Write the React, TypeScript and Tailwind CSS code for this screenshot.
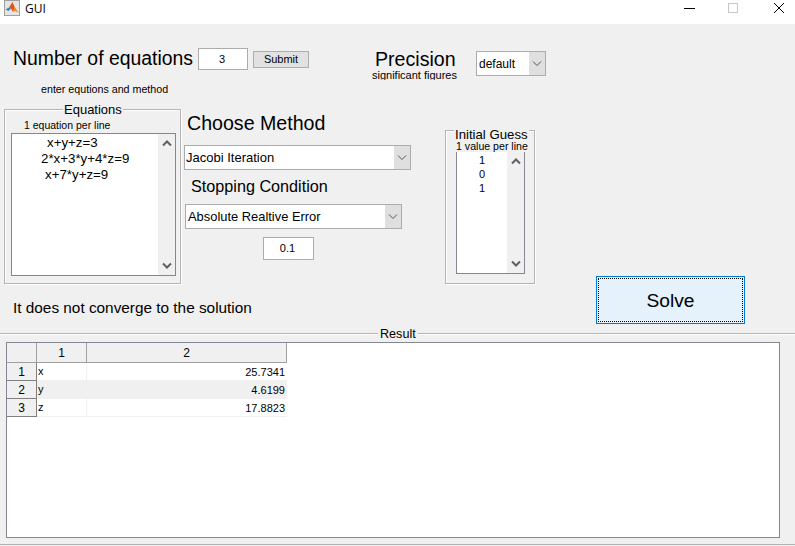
import React from 'react';

const sans = { fontFamily: '"Liberation Sans", Arial, sans-serif' };

const Chevron = ({ up = false, thick = false }: { up?: boolean; thick?: boolean }) => (
  <svg width="10" height="7" viewBox="0 0 10 7" fill="none" stroke={thick ? '#606060' : '#555555'} strokeWidth={thick ? 2 : 1}>
    <path d={up ? 'M1 5.5 L5 1.5 L9 5.5' : 'M1 1.5 L5 5.5 L9 1.5'} />
  </svg>
);

const Scrollbar = () => (
  <div className="w-[17px] bg-[#f0f0f0] flex flex-col items-center justify-between py-[6px] shrink-0">
    <Chevron up thick />
    <Chevron thick />
  </div>
);

const Dropdown = ({ label, className, text }: { label: string; className: string; text: string }) => (
  <div className={`flex items-stretch bg-white border border-[#acacac] ${className}`}>
    <div className={`flex-1 pl-[2px] flex items-center text-black whitespace-nowrap ${text}`}>{label}</div>
    <div className="w-[16px] bg-[#dfdfdf] flex items-center justify-center">
      <Chevron />
    </div>
  </div>
);

const NumberBox = ({ value, className }: { value: string; className: string }) => (
  <div className={`bg-white border border-[#acacac] flex items-center justify-center pr-[2px] text-[11px] text-black ${className}`}>
    {value}
  </div>
);

const Panel = ({ title, className, titleClass, children }: { title: string; className: string; titleClass: string; children: React.ReactNode }) => (
  <div className={`relative border border-[#b4b4b4] shadow-[inset_1px_1px_0_#fff,1px_1px_0_#fff] ${className}`}>
    <span className={`absolute bg-[#f0f0f0] px-[1px] leading-none text-black whitespace-nowrap ${titleClass}`}>{title}</span>
    {children}
  </div>
);

const rows = [
  { id: '1', name: 'x', value: '25.7341', bg: 'bg-white' },
  { id: '2', name: 'y', value: '4.6199', bg: 'bg-[#f0f0f0]' },
  { id: '3', name: 'z', value: '17.8823', bg: 'bg-white' },
];

const ResultTable = () => (
  <div className="w-[280px] text-[11px] text-black">
    <div className="flex h-[20px] text-[12px]">
      <div className="w-[30px] bg-[#f0f0f0] border-r border-b border-[#a0a0a0]" />
      <div className="w-[50px] bg-[#f0f0f0] border-r border-b border-[#a0a0a0] flex items-center justify-center pt-px">1</div>
      <div className="w-[200px] bg-[#f0f0f0] border-b border-r border-[#a0a0a0] flex items-center justify-center pt-px">2</div>
    </div>
    {rows.map((r) => (
      <div key={r.id} className="flex h-[18px]">
        <div className="w-[30px] bg-[#f0f0f0] border-r border-b border-[#808080] flex items-center justify-center pt-px text-[12px]">{r.id}</div>
        <div className={`w-[50px] ${r.bg} border-r border-b border-[#f0f0f0] pl-[1px] flex items-center`}>{r.name}</div>
        <div className={`w-[200px] ${r.bg} border-b border-[#f0f0f0] pr-[2px] pt-px flex items-center justify-end`}>{r.value}</div>
      </div>
    ))}
  </div>
);

export default function App() {
  return (
    <div className="w-[795px] h-[546px] flex flex-col bg-[#f0f0f0] overflow-hidden" style={sans}>
      <div className="h-[24px] bg-white flex items-center pb-[8px] shrink-0">
        <div className="ml-[4px] w-[16px] h-[16px] border border-[#a0a0a0] bg-[#e4e4e4] flex items-center justify-center">
          <svg width="14" height="14" viewBox="0 0 14 14">
            <path d="M0.5 8.5 L4 6.5 L6 7.5 L3.5 10 Z" fill="#3f7fb5" />
            <path d="M4 6.5 L7.5 1 L9.5 6 L8 11 L6 7.5 Z" fill="#d9531e" />
            <path d="M7.5 1 L10 6 L13.5 12 L10.5 10 L8 11 L9.5 6 Z" fill="#f08a24" />
          </svg>
        </div>
        <span className="ml-[5px] mt-px text-[12px] text-black" style={{ fontFamily: '"Open Sans", sans-serif' }}>GUI</span>
        <div className="ml-auto flex items-center">
          <div className="w-[11px] h-px bg-black mr-[33px]" />
          <div className="w-[10px] h-[10px] border border-[#c8c8c8] mr-[35px]" />
          <svg width="12" height="12" viewBox="0 0 12 12" stroke="#000" strokeWidth="1" className="mr-[10px]">
            <path d="M1 1 L11 11 M11 1 L1 11" />
          </svg>
        </div>
      </div>

      <div className="h-[309px] shrink-0 flex flex-col">
        <div className="flex items-start pt-[23px] h-[58px] shrink-0">
          <div className="ml-[13px] w-[185px] text-[19.4px] leading-[23px] text-black whitespace-nowrap">Number of equations</div>
          <NumberBox value="3" className="w-[50px] h-[22px] mt-px" />
          <div className="ml-[5px] mt-[4px] w-[56px] h-[17px] bg-[#e1e1e1] border border-[#adadad] flex items-center justify-center text-[11px] text-black">Submit</div>
          <div className="ml-[63px] mt-[1px] w-[104px] flex flex-col items-start">
            <div className="ml-[3px] text-[19.6px] leading-[23px] text-black">Precision</div>
            <div className="text-[11px] leading-[9px] h-[9px] overflow-hidden text-black whitespace-nowrap">significant figures</div>
          </div>
          <Dropdown label="default" className="w-[70px] h-[25px] mt-[4px]" text="text-[12px]" />
        </div>

        <div className="ml-[41px] mt-[1px] h-[13px] text-[10.7px] leading-[13px] text-black shrink-0">enter equtions and method</div>

        <div className="flex items-start mt-[13px]">
          <div className="ml-[4px] w-[177px] flex flex-col">
            <Panel title="Equations" className="w-[177px] h-[175px] pt-[4px]" titleClass="left-[58px] -top-[7px] text-[13px]">
              <div className="mt-[5px] ml-[19px] text-[10.5px] leading-[12px] text-black">1 equation per line</div>
              <div className="ml-[6px] mt-[2px] w-[165px] h-[143px] bg-white border border-[#828790] flex">
                <div className="flex-1 text-[13.3px] leading-[16px] text-black pt-px whitespace-nowrap">
                  <div className="pl-[35px]">x+y+z=3</div>
                  <div className="pl-[29px]">2*x+3*y+4*z=9</div>
                  <div className="pl-[33px]">x+7*y+z=9</div>
                </div>
                <Scrollbar />
              </div>
            </Panel>
            <div className="ml-[9px] mt-[15px] text-[15.35px] leading-[18px] text-black whitespace-nowrap">It does not converge to the solution</div>
          </div>

          <div className="ml-[3px] w-[227px] flex flex-col pt-[3px]">
            <div className="ml-[3px] text-[19.6px] leading-[23px] text-black">Choose Method</div>
            <Dropdown label="Jacobi Iteration" className="w-[227px] h-[25px] mt-[10px]" text="text-[13px] -ml-px" />
            <div className="ml-[7px] mt-[7px] text-[16.2px] leading-[18px] text-black">Stopping Condition</div>
            <Dropdown label="Absolute Realtive Error" className="ml-px w-[217px] h-[25px] mt-[9px]" text="text-[12.9px]" />
            <NumberBox value="0.1" className="ml-[79px] mt-[8px] w-[51px] h-[23px]" />
          </div>

          <Panel title="Initial Guess" className="ml-[34px] mt-[21px] w-[90px] h-[154px] pt-[3px]" titleClass="left-[8px] -top-[3px] text-[13.2px]">
            <div className="mt-[6px] ml-[10px] text-[10.6px] leading-[12px] text-black whitespace-nowrap">1 value per line</div>
            <div className="ml-[10px] w-[69px] h-[122px] bg-white border-x border-b border-[#828790] flex">
              <div className="flex-1 text-center text-[11px] leading-[14px] text-black pt-[1px]">
                <div>1</div>
                <div>0</div>
                <div>1</div>
              </div>
              <Scrollbar />
            </div>
          </Panel>

          <button className="ml-[61px] mt-[167px] w-[149px] h-[48px] bg-[#e5f1fb] border border-[#0078d7] p-px text-black">
            <div className="w-full h-full border border-dotted border-black flex items-center justify-center pt-[2px] text-[19.2px]">Solve</div>
          </button>
        </div>
      </div>

      <div className="relative flex-1 border-t border-[#b4b4b4] shadow-[inset_0_1px_0_#fff] mb-[1px] border-b">
        <span className="absolute left-[378px] -top-[6px] bg-[#f0f0f0] px-[2px] text-[12.6px] leading-none text-black">Result</span>
        <div className="ml-[6px] mt-[8px] w-[774px] h-[196px] bg-white border border-[#828790]">
          <ResultTable />
        </div>
      </div>
    </div>
  );
}
